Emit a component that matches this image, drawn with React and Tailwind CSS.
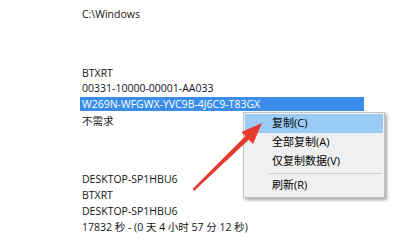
import React from "react";

const listFont = { fontFamily: '"Open Sans", "Noto Sans CJK SC", sans-serif' };

const MenuItem = ({ label, active }) => (
  <div
    className={`mx-[1px] h-[19px] flex items-center pl-[27px] text-[11px] text-black ${
      active ? "bg-[#99cbf5]" : ""
    }`}
  >
    {label}
  </div>
);

const App = () => {
  return (
    <div
      className="relative w-[400px] h-[250px] overflow-hidden bg-white text-[10.5px] text-[#141414]"
      style={listFont}
    >
      <div className="flex flex-col pl-[82px] pt-[6px]">
        <div className="h-4 leading-4">C:\Windows</div>
        <div className="h-4 leading-4 mt-[43px]">BTXRT</div>
        <div className="h-4 leading-4 mt-[-1px]">00331-10000-00001-AA033</div>
        <div className="h-[14px] leading-[14px] -ml-[2px] pl-[2px] w-[284px] bg-[#3a8ee8] text-white mt-[1px]">
          W269N-WFGWX-YVC9B-4J6C9-T83GX
        </div>
        <div className="h-4 leading-4 mt-[2px]">不需求</div>
        <div className="h-4 leading-4 mt-[42px]">DESKTOP-SP1HBU6</div>
        <div className="h-4 leading-4">BTXRT</div>
        <div className="h-4 leading-4">DESKTOP-SP1HBU6</div>
        <div className="h-4 leading-4">17832 秒 - (0 天 4 小时 57 分 12 秒)</div>
      </div>

      {/* context menu */}
      <div className="absolute left-[243px] top-[112px] w-[142px] h-[86px] bg-[#f0f0f0] border border-[#c4c4c4] shadow-[2px_2px_3px_rgba(0,0,0,0.35)] pt-[1px]">
        <MenuItem label="复制(C)" active />
        <MenuItem label="全部复制(A)" />
        <MenuItem label="仅复制数据(V)" />
        <div className="h-[1px] bg-[#d0d0d0] ml-[24px] mr-[2px] my-[2px]" />
        <MenuItem label="刷新(R)" />
      </div>

      {/* red arrow */}
      <svg
        className="absolute left-0 top-0 pointer-events-none"
        width="400"
        height="250"
        viewBox="0 0 400 250"
      >
        <polygon
          points="192.3,189.2 194.3,190.8 249.5,139 246,135.5"
          fill="#e8392f"
        />
        <polygon points="262,123 241.5,132 253,144" fill="#e8392f" />
      </svg>
    </div>
  );
};

export default App;
